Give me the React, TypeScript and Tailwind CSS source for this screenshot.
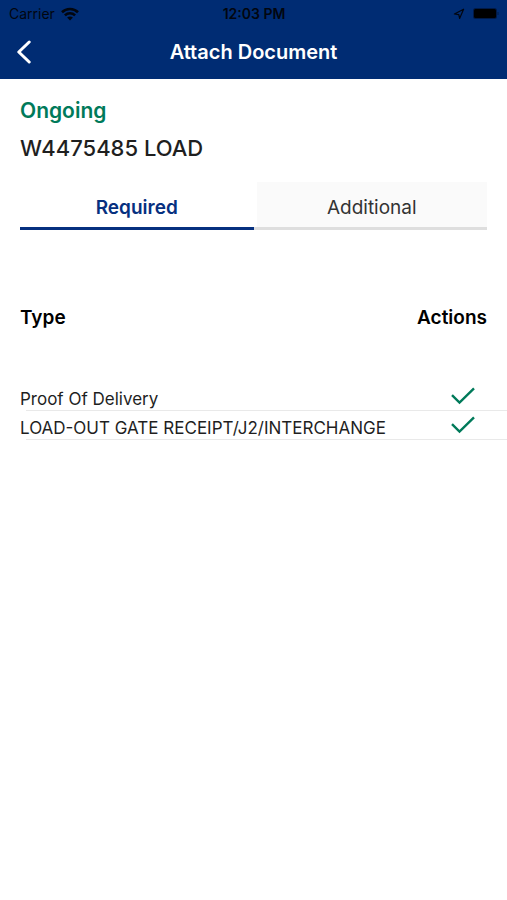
import { useState } from "react"

const documents = ["Proof Of Delivery", "LOAD-OUT GATE RECEIPT/J2/INTERCHANGE"]

function StatusBar() {
  return (
    <div className="grid h-7 grid-cols-3 items-center pr-2 pl-[9px] text-sm leading-4 text-[#02060f]">
      <div className="flex items-center gap-1.5">
        <span>Carrier</span>
        <svg width="18" height="14" viewBox="0 0 18 14" fill="none" stroke="currentColor" strokeWidth="2.6" aria-hidden="true">
          <path d="M1 5.2C5.4.9 12.6.9 17 5.2" />
          <path d="M3.9 8.4c2.9-2.8 7.3-2.8 10.2 0" />
          <path d="M9 13.4 6.1 10.6c1.6-1.6 4.2-1.6 5.8 0z" fill="currentColor" stroke="none" />
        </svg>
      </div>
      <span className="text-center font-semibold">12:03 PM</span>
      <div className="flex items-center justify-end gap-2">
        <svg width="12" height="12" viewBox="0 0 12 12" fill="none" stroke="currentColor" strokeWidth="1.2" strokeLinejoin="round" aria-hidden="true">
          <path d="M10.6 1.2 6.6 10.4 5.8 6.6 1.4 6z" />
        </svg>
        <svg width="26" height="12" viewBox="0 0 26 12" aria-hidden="true">
          <rect x="0" y="0" width="24" height="11" rx="2.5" fill="#011a47" />
          <rect x="1" y="1" width="22" height="9" rx="1.5" fill="#000000" />
          <path d="M25 4v3" stroke="#011a47" />
        </svg>
      </div>
    </div>
  )
}

function Header() {
  return (
    <header className="bg-[#002c73]">
      <StatusBar />
      <div className="grid h-[51px] grid-cols-[48px_1fr_48px] items-center pb-1">
        <button aria-label="Back" className="flex h-full items-center pl-4 text-white">
          <svg width="16" height="24" viewBox="0 0 16 24" fill="none" stroke="currentColor" strokeWidth="3" strokeLinecap="round" strokeLinejoin="round">
            <path d="M13.2 2 2.8 12l10.4 10" />
          </svg>
        </button>
        <h1 className="text-center text-xl font-semibold text-white">Attach Document</h1>
      </div>
    </header>
  )
}

interface TabProps {
  label: string
  active: boolean
  onSelect: () => void
}

function Tab({ label, active, onSelect }: TabProps) {
  return (
    <button
      role="tab"
      aria-selected={active}
      onClick={onSelect}
      className={
        active
          ? "flex border-b-[3px] border-[#06307f] font-semibold text-[#06307f]"
          : "flex border-b-[3px] border-[#dedede] pl-[3px] text-[#333333]"
      }
    >
      <span className={active ? "flex-1 self-stretch pt-3" : "flex-1 self-stretch bg-[#fafafa] pt-3"}>{label}</span>
    </button>
  )
}

function CheckIcon() {
  return (
    <svg width="24" height="18" viewBox="0 0 24 18" fill="none" stroke="#007a5a" strokeWidth="2.4" role="img" aria-label="Attached">
      <path d="M1 8.2 8.5 15.6 23 1.3" />
    </svg>
  )
}

export default function App() {
  const [tab, setTab] = useState("required")

  return (
    <div className="min-h-screen bg-white font-['Inter','Liberation_Sans',sans-serif] text-[#1f1f1f]">
      <Header />
      <main>
        <section className="px-5 pt-4">
          <p className="text-[21px] leading-8 font-semibold text-[#007a5a]">Ongoing</p>
          <h2 className="mt-[5px] text-[22px] leading-8 font-medium">W4475485 LOAD</h2>
          <div role="tablist" className="mt-[18px] grid h-12 grid-cols-2 text-[19px]">
            <Tab label="Required" active={tab === "required"} onSelect={() => setTab("required")} />
            <Tab label="Additional" active={tab === "additional"} onSelect={() => setTab("additional")} />
          </div>
        </section>

        <table className="mt-18 w-full">
          <thead>
            <tr className="text-[19px] leading-8 text-black">
              <th className="pb-12 pl-5 text-left font-semibold">Type</th>
              <th className="pr-5 pb-12 text-right font-semibold">Actions</th>
            </tr>
          </thead>
          <tbody>
            {documents.map((name) => (
              <tr
                key={name}
                className="relative h-[29px] after:absolute after:right-0 after:bottom-0 after:left-[26px] after:h-px after:bg-[#e9e9e9]"
              >
                <td className="pt-1 pl-5 text-[17px] leading-6">{name}</td>
                <td className="pr-8 pb-0.5">
                  <div className="flex justify-end">
                    <CheckIcon />
                  </div>
                </td>
              </tr>
            ))}
          </tbody>
        </table>
      </main>
    </div>
  )
}
